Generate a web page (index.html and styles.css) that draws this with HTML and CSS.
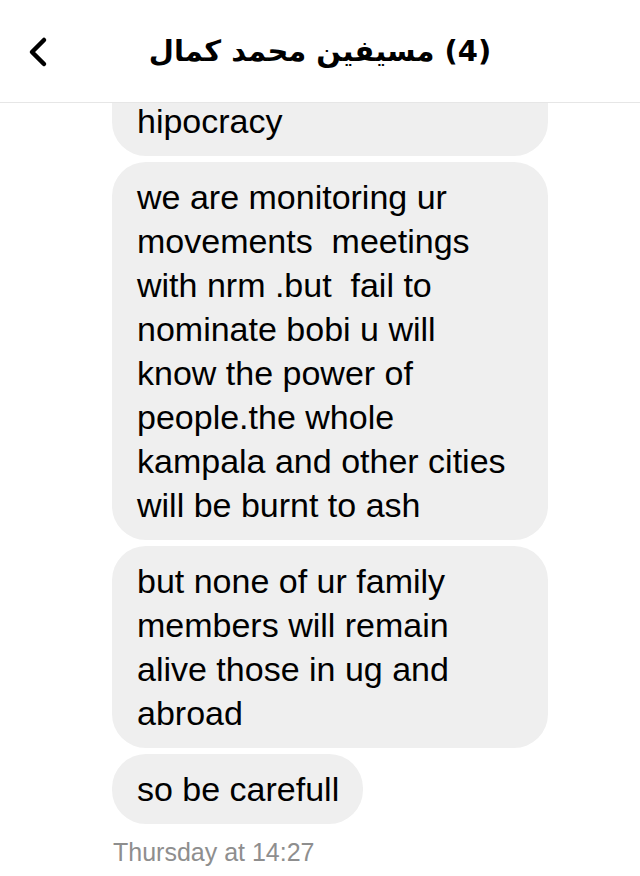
FILE: index.html
```html
<!DOCTYPE html>
<html lang="en">
<head>
    <meta charset="UTF-8">
    <meta name="viewport" content="width=device-width, initial-scale=1.0">
    <title>Messages</title>

    <link rel="stylesheet" href="styles.css">
</head>
<body>

    <div id="header">
        <button class="back">
            <svg width="24" height="32" viewBox="0 0 24 32">
                <path d="M18 4 L6 16 L18 28" fill="none" stroke="#000" stroke-width="4.5" stroke-linecap="round" stroke-linejoin="round"/>
            </svg>
        </button>
        <p class="title" dir="rtl">(4) مسيفين محمد كمال</p>
    </div>

    <div id="thread">
        <div class="bubble cut">hipocracy</div>
        <div class="bubble">we are monitoring ur movements&nbsp; meetings with nrm .but&nbsp; fail to nominate bobi u will know the power of people.the whole kampala and other cities will be burnt to ash</div>
        <div class="bubble">but none of ur family members will remain alive those in ug and abroad</div>
        <div class="bubble">so be carefull</div>
        <p class="stamp">Thursday at 14:27</p>
    </div>

</body>
</html>
```

FILE: styles.css
```css
body{
    margin: 0;
    background: white;
    overflow: hidden;
    font-family: 'Liberation Sans', Arial, sans-serif;
}

#header{
    display: flex;
    align-items: center;
    justify-content: center;
    position: relative;
    z-index: 1;
    height: 102px;
    background: white;
    border-bottom: 1px solid #e6e6e6;
}

.back{
    position: absolute;
    left: 26px;
    top: 36px;
    padding: 0;
    border: none;
    background: none;
}

.title{
    margin: 0;
    font-family: 'DejaVu Sans', sans-serif;
    font-weight: bold;
    font-size: 29px;
    color: #000;
}

#thread{
    display: flex;
    flex-direction: column;
    align-items: flex-start;
    gap: 6px;
    height: 773px;
    overflow: hidden;
    padding-left: 112px;
}

.bubble{
    box-sizing: border-box;
    max-width: 436px;
    padding: 13px 24px 13px 25px;
    background: #efefef;
    border-radius: 34px;
    font-size: 34px;
    line-height: 44px;
    color: #000;
}

.bubble.cut{
    width: 436px;
    margin-top: -44px;
    padding-top: 40px;
}

.stamp{
    margin: 7px 0 0 1px;
    font-size: 25px;
    line-height: 30px;
    color: #8e8e8e;
}
```
